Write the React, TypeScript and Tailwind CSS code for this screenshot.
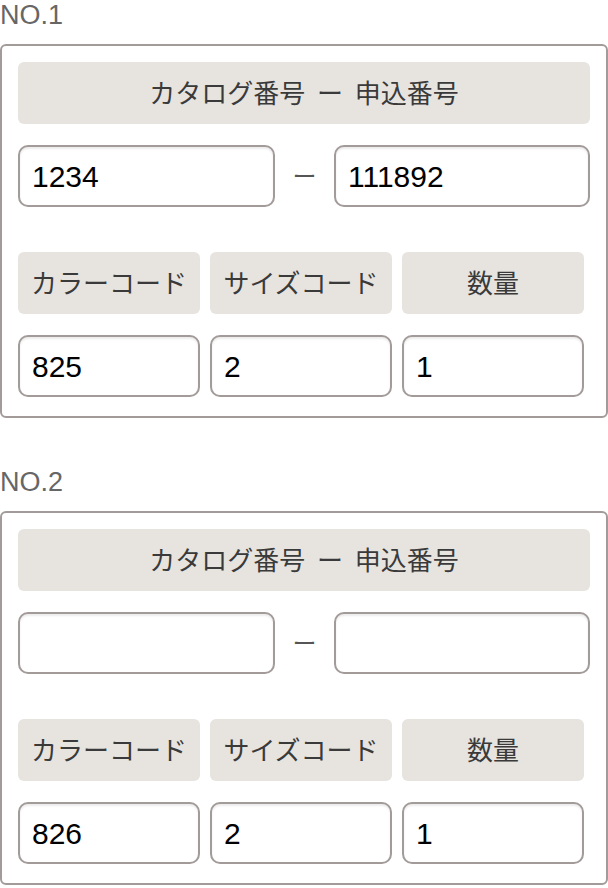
import React from 'react';

interface OrderEntry {
  no: number;
  catalog: string;
  apply: string;
  color: string;
  size: string;
  qty: string;
}

const entries: OrderEntry[] = [
  { no: 1, catalog: '1234', apply: '111892', color: '825', size: '2', qty: '1' },
  { no: 2, catalog: '', apply: '', color: '826', size: '2', qty: '1' },
];

const jpFont = "font-['Noto_Sans','Noto_Sans_CJK_JP',sans-serif]";

const Label: React.FC<{ children: React.ReactNode }> = ({ children }) => (
  <div
    className={`h-[62px] flex items-center justify-center rounded-[6px] bg-[#e7e4e0] text-[26px] text-[#3a3a3a] [word-spacing:5px] ${jpFont}`}
  >
    {children}
  </div>
);

const Field: React.FC<{ value: string }> = ({ value }) => (
  <div className="h-[62px] flex items-center rounded-[10px] border-2 border-[#a29b99] bg-white px-[12px] shadow-[inset_0_2px_2px_rgba(0,0,0,0.08)] font-['Liberation_Sans',sans-serif] text-[30px] text-black">
    {value}
  </div>
);

const OrderCard: React.FC<{ entry: OrderEntry }> = ({ entry }) => (
  <section>
    <div className="h-[44px] font-['Liberation_Sans',sans-serif] text-[27px] leading-[30px] text-[#666]">
      NO.{entry.no}
    </div>
    <div className="rounded-[6px] border-2 border-[#a29b99] bg-white px-[16px] pt-[16px] pb-[19px]">
      <Label>カタログ番号 ー 申込番号</Label>

      <div className="mt-[21px] flex items-center">
        <div className="w-[257px]">
          <Field value={entry.catalog} />
        </div>
        <div className={`flex-1 text-center text-[24px] text-[#555] ${jpFont}`}>ー</div>
        <div className="w-[256px]">
          <Field value={entry.apply} />
        </div>
      </div>

      <div className="mt-[45px] grid grid-cols-[182px_182px_182px] gap-x-[10px]">
        <Label>カラーコード</Label>
        <Label>サイズコード</Label>
        <Label>数量</Label>
      </div>

      <div className="mt-[21px] grid grid-cols-[182px_182px_182px] gap-x-[10px]">
        <Field value={entry.color} />
        <Field value={entry.size} />
        <Field value={entry.qty} />
      </div>
    </div>
  </section>
);

export default function App() {
  return (
    <div className="w-[608px] min-h-[888px] bg-white">
      <div className="flex flex-col gap-[49px]">
        {entries.map((e) => (
          <OrderCard key={e.no} entry={e} />
        ))}
      </div>
    </div>
  );
}
